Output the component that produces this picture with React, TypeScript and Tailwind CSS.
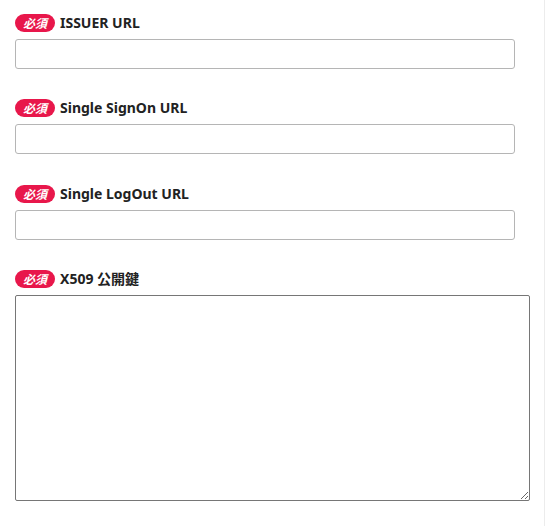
const fields = ['ISSUER URL', 'Single SignOn URL', 'Single LogOut URL'];

const Required = () => (
  <span
    className="inline-flex h-[18px] w-[40px] items-center justify-center rounded-full bg-[#e8174b] text-[12px] font-bold italic leading-none text-white"
    style={{ fontFamily: '"Noto Sans CJK JP", sans-serif' }}
  >
    必須
  </span>
);

const Label = ({ text }: { text: string }) => (
  <div className="flex h-[18px] items-center gap-[5px]">
    <Required />
    <span className="text-[14px] font-bold leading-none text-[#222]">{text}</span>
  </div>
);

export default function App() {
  return (
    <div
      className="h-[526px] w-[545px] border-r border-[#ececec] bg-white pl-[15px] pt-[14px]"
      style={{ fontFamily: '"Noto Sans", "Noto Sans CJK JP", sans-serif' }}
    >
      {fields.map((f, i) => (
        <div key={f} className={i === 1 ? 'mb-[31px]' : 'mb-[30px]'}>
          <Label text={f} />
          <input
            type="text"
            className="mt-[7px] block h-[30px] w-[500px] rounded-[3px] border border-[#b5b5b5] bg-white px-2 text-[13px] outline-none"
          />
        </div>
      ))}
      <div>
        <Label text="X509 公開鍵" />
        <textarea className="mt-[7px] block h-[206px] w-[515px] rounded-[2px] border border-[#767676] bg-white p-1 text-[13px] outline-none" />
      </div>
    </div>
  );
}
